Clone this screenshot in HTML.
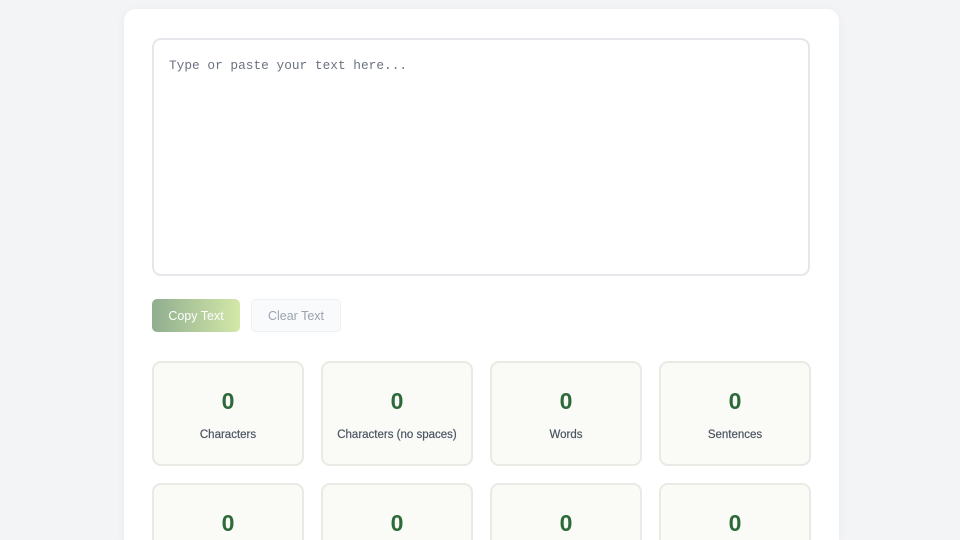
<!DOCTYPE html>
<html style="width:960px;height:540px;overflow:hidden"><head><style>
*{box-sizing:border-box;margin:0;padding:0}
html,body{width:960px;height:540px;overflow:hidden}
body{background:#f3f4f6;font-family:"Liberation Sans",sans-serif;position:relative}
.card{position:absolute;left:124px;top:9px;width:715px;height:531px;background:#fff;border-radius:12px 12px 0 0;box-shadow:0 2px 10px rgba(0,0,0,.05)}
.ta{position:absolute;left:152px;top:38px;width:658px;height:238px;border:2px solid #e5e7eb;border-radius:9px;background:#fff;font-family:"Liberation Mono",monospace;font-size:12.8px;color:#6b7280;padding:18px 15px}
.btn{position:absolute;top:299px;height:33px;border-radius:5px;font-size:12.5px;display:flex;align-items:center;justify-content:center}
.copy{left:152px;width:88px;background:linear-gradient(90deg,#8fae8f,#d3e8a8);color:#fff}
.clear{left:251px;width:90px;background:#f9fafb;border:1px solid #eef0f3;color:#9ca3af}
.st{position:absolute;width:152px;height:105px;background:#fafbf6;border:2px solid #e8eae4;border-radius:9px;text-align:center}
.st.b2{height:57px;border-bottom:none;border-radius:9px 9px 0 0}
.st b{display:block;font-size:23px;color:#2d6a3a;margin-top:25px;line-height:26px}
.st span{display:block;font-size:11.5px;color:#4b5563;margin-top:15px;-webkit-text-stroke:0.2px #4b5563}
</style></head><body>
<div class="card"></div>
<div class="ta">Type or paste your text here...</div>
<div class="btn copy">Copy Text</div>
<div class="btn clear">Clear Text</div>
<div class="st" style="left:152px;top:361px"><b>0</b><span>Characters</span></div>
<div class="st" style="left:321px;top:361px"><b>0</b><span>Characters (no spaces)</span></div>
<div class="st" style="left:490px;top:361px"><b>0</b><span>Words</span></div>
<div class="st" style="left:659px;top:361px"><b>0</b><span>Sentences</span></div>
<div class="st b2" style="left:152px;top:483px"><b>0</b></div>
<div class="st b2" style="left:321px;top:483px"><b>0</b></div>
<div class="st b2" style="left:490px;top:483px"><b>0</b></div>
<div class="st b2" style="left:659px;top:483px"><b>0</b></div>
</body></html>
